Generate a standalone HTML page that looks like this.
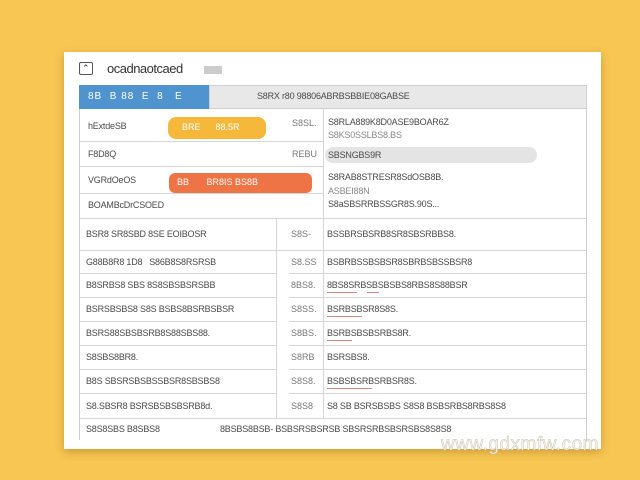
<!DOCTYPE html>
<html><head><meta charset="utf-8">
<style>
*{margin:0;padding:0;box-sizing:border-box}
body{width:640px;height:480px;background:#f8c653;position:relative;overflow:hidden;font-family:"Liberation Sans",sans-serif;color:#666;font-size:9px}
.a{position:absolute;white-space:nowrap}
.card{left:64px;top:52px;width:537px;height:397px;background:#fff;box-shadow:0 3px 8px rgba(120,80,0,.35)}
.hl{background:#d6d6d6;height:1px}
.vl{background:#d6d6d6;width:1px}
.t{font-size:9px;color:#4a4a4a;letter-spacing:-0.2px}
.l{font-size:9px;color:#777}
</style></head><body>
<div class="a card"></div>
<div class="a" style="left:79px;top:62px;width:14px;height:13px;border:1.5px solid #555;border-radius:2px"></div>
<div class="a" style="left:82px;top:63px;font-size:9px;color:#333">⌃</div>
<div class="a" style="left:107px;top:61px;font-size:13px;color:#333;letter-spacing:-0.5px">ocadnaotcaed</div>
<div class="a" style="left:204px;top:66px;width:18px;height:8px;background:#ccc"></div>
<div class="a" style="left:79px;top:85px;width:508px;height:355px;border:1px solid #d0d0d0;border-bottom:none"></div>
<div class="a" style="left:209px;top:85px;width:378px;height:24px;background:#e8e8e8;border:1px solid #d0d0d0"></div>
<div class="a" style="left:79px;top:85px;width:130px;height:24px;background:#4f93cf"></div>
<div class="a" style="left:88px;top:91px;font-size:10px;color:#fff;letter-spacing:1px">8B &nbsp;B 88 &nbsp;E &nbsp;8 &nbsp;&nbsp;E</div>
<div class="a t" style="left:257px;top:91px">S8RX r80 98806ABRBSBBIE08GABSE</div>
<div class="a vl" style="left:323px;top:109px;height:109px"></div>
<div class="a hl" style="left:79px;top:141px;width:244px"></div>
<div class="a hl" style="left:79px;top:166px;width:244px"></div>
<div class="a hl" style="left:79px;top:193px;width:244px"></div>
<div class="a hl" style="left:79px;top:218px;width:508px"></div>
<div class="a t" style="left:88px;top:121px">hExtdeSB</div>
<div class="a" style="left:168px;top:117px;width:98px;height:22px;background:#f6b83a;border-radius:8px;color:#fff;font-size:9px;padding:5px 0 0 14px">BRE &nbsp;&nbsp;&nbsp;&nbsp; 88.5R</div>
<div class="a l" style="left:292px;top:118px">S8SL.</div>
<div class="a t" style="left:328px;top:117px">S8RLA889K8D0ASE9BOAR6Z</div>
<div class="a t" style="left:328px;top:130px;color:#888">S8KS0SSLBS8.BS</div>
<div class="a t" style="left:88px;top:149px">F8D8Q</div>
<div class="a l" style="left:292px;top:149px">REBU</div>
<div class="a" style="left:325px;top:147px;width:212px;height:16px;background:#e4e4e4;border-radius:8px"></div>
<div class="a t" style="left:328px;top:150px">SBSNGBS9R</div>
<div class="a t" style="left:88px;top:175px">VGRdOeOS</div>
<div class="a" style="left:169px;top:173px;width:143px;height:20px;background:#ef7445;border-radius:6px;color:#fff;font-size:9px;padding:4px 0 0 8px">BB &nbsp;&nbsp;&nbsp;&nbsp;&nbsp; BR8IS BS8B</div>
<div class="a t" style="left:328px;top:172px">S8RAB8STRESR8SdOSB8B.</div>
<div class="a t" style="left:328px;top:186px;color:#888">ASBEI88N</div>
<div class="a t" style="left:328px;top:199px">S8aSBSRRBSSGR8S.90S...</div>
<div class="a t" style="left:88px;top:200px">BOAMBcDrCSOED</div>
<div class="a vl" style="left:276px;top:218px;height:200px"></div>
<div class="a vl" style="left:323px;top:218px;height:200px"></div>
<div class="a hl" style="left:79px;top:250px;width:508px"></div>
<div class="a hl" style="left:79px;top:273px;width:197px"></div><div class="a hl" style="left:289px;top:273px;width:298px"></div>
<div class="a hl" style="left:79px;top:297px;width:197px"></div><div class="a hl" style="left:289px;top:297px;width:298px"></div>
<div class="a hl" style="left:79px;top:321px;width:197px"></div><div class="a hl" style="left:289px;top:321px;width:298px"></div>
<div class="a hl" style="left:79px;top:345px;width:197px"></div><div class="a hl" style="left:289px;top:345px;width:298px"></div>
<div class="a hl" style="left:79px;top:369px;width:197px"></div><div class="a hl" style="left:289px;top:369px;width:298px"></div>
<div class="a hl" style="left:79px;top:393px;width:197px"></div><div class="a hl" style="left:289px;top:393px;width:298px"></div>
<div class="a hl" style="left:79px;top:418px;width:508px"></div>
<div class="a t" style="left:86px;top:229px">BSR8 SR8SBD 8SE EOIBOSR</div>
<div class="a l" style="left:291px;top:229px">S8S-</div>
<div class="a t" style="left:327px;top:229px">BSSBRSBSRB8SR8SBSRBBS8.</div>
<div class="a t" style="left:86px;top:257px">G88B8R8 1D8 &nbsp; S86B8S8RSRSB</div>
<div class="a l" style="left:291px;top:257px">S8.SS</div>
<div class="a t" style="left:327px;top:257px">BSBRBSSBSBSR8SBRBSBSSBSR8</div>
<div class="a t" style="left:86px;top:280px">B8SRBS8 SBS 8S8SBSBSRSBB</div>
<div class="a l" style="left:291px;top:280px">8BS8.</div>
<div class="a t" style="left:327px;top:280px">8BS8SRBSBSBSBS8RBS8S88BSR</div>
<div class="a" style="left:327px;top:292px;width:30px;height:1px;background:#d88"></div>
<div class="a" style="left:367px;top:292px;width:12px;height:1px;background:#d88"></div>
<div class="a t" style="left:86px;top:304px">BSRSBSBS8 S8S BSBS8BSRBSBSR</div>
<div class="a l" style="left:291px;top:304px">S8SS.</div>
<div class="a t" style="left:327px;top:304px">BSRBSBSR8S8S.</div>
<div class="a" style="left:327px;top:316px;width:35px;height:1px;background:#d88"></div>
<div class="a t" style="left:86px;top:328px">BSRS88SBSBSRB8S88SBS88.</div>
<div class="a l" style="left:291px;top:328px">S8BS.</div>
<div class="a t" style="left:327px;top:328px">BSRBSBSBSRBS8R.</div>
<div class="a" style="left:327px;top:340px;width:25px;height:1px;background:#d88"></div>
<div class="a t" style="left:86px;top:352px">S8SBS8BR8.</div>
<div class="a l" style="left:291px;top:352px">S8RB</div>
<div class="a t" style="left:327px;top:352px">BSRSBS8.</div>
<div class="a t" style="left:86px;top:376px">B8S SBSRSBSBSSBSR8SBSBS8</div>
<div class="a l" style="left:291px;top:376px">S8S8.</div>
<div class="a t" style="left:327px;top:376px">BSBSBSRBSRBSR8S.</div>
<div class="a" style="left:327px;top:388px;width:45px;height:1px;background:#d88"></div>
<div class="a t" style="left:86px;top:401px">S8.SBSR8 BSRSBSBSBSRB8d.</div>
<div class="a l" style="left:291px;top:401px">S8S8</div>
<div class="a t" style="left:327px;top:401px">S8 SB BSRSBSBS S8S8 BSBSRBS8RBS8S8</div>
<div class="a t" style="left:86px;top:424px">S8S8SBS B8SBS8</div>
<div class="a t" style="left:220px;top:424px">8BSBS8BSB- BSBSRSBSRSB SBSRSRBSBSRSBS8S8S8</div>
<div class="a" style="left:441px;top:434px;font-size:19px;color:#fdf3dc;letter-spacing:0.5px;-webkit-text-stroke:0.4px #bbb">www.gdxmfw.com</div>
</body></html>
